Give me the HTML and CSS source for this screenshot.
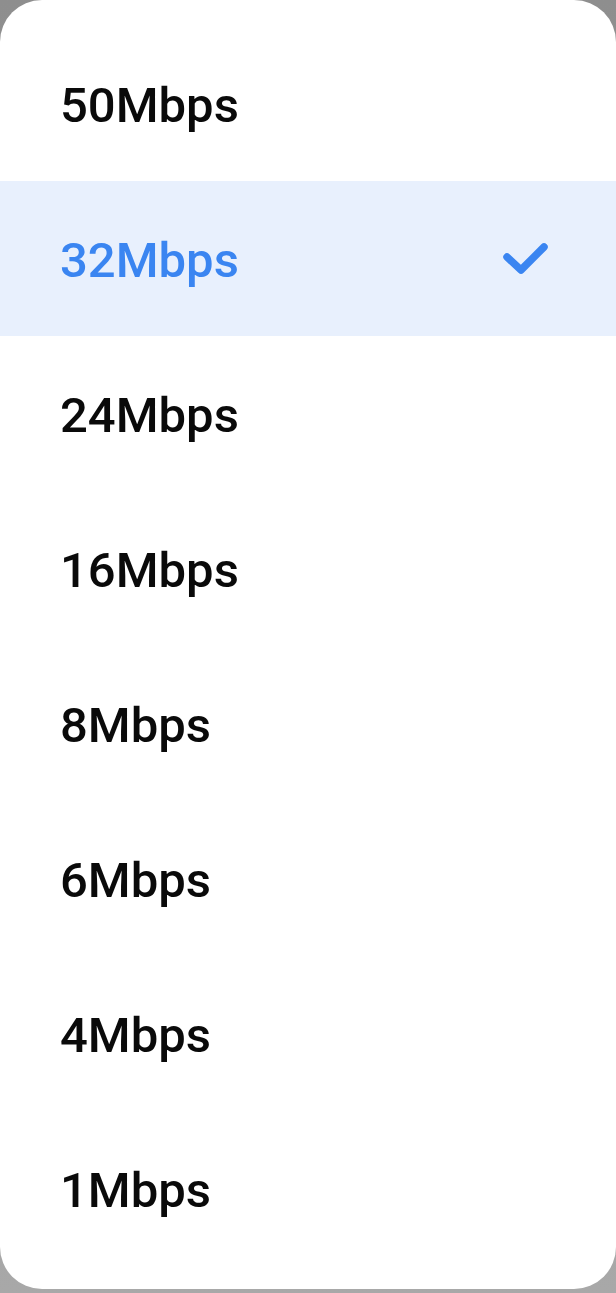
FILE: index.html
```html
<!DOCTYPE html>
<html lang="en">
<head>
    <meta charset="UTF-8">
    <meta name="viewport" content="width=device-width, initial-scale=1.0">
    <title>Débit</title>
    <link rel="stylesheet" href="styles.css">
</head>
<body>
    <div class="sheet">
        <ul class="options">
            <li class="option">50Mbps</li>
            <li class="option selected">
                <span>32Mbps</span>
                <svg class="check" width="52" height="40" viewBox="0 0 52 40">
                    <path d="M7 18 L21 31 L44 8" fill="none" stroke="currentColor" stroke-width="7.5" stroke-linecap="round" stroke-linejoin="round"/>
                </svg>
            </li>
            <li class="option">24Mbps</li>
            <li class="option">16Mbps</li>
            <li class="option">8Mbps</li>
            <li class="option">6Mbps</li>
            <li class="option">4Mbps</li>
            <li class="option">1Mbps</li>
        </ul>
    </div>
</body>
</html>
```

FILE: styles.css
```css
body {
    margin: 0;
    height: 1293px;
    background: linear-gradient(#8e8e8e, #a8a8a8);
    font-family: Roboto, "Noto Sans", sans-serif;
    overflow: hidden;
}
.sheet {
    height: 1289px;
    box-sizing: border-box;
    padding-top: 26px;
    background: #fff;
    border-radius: 42px;
}
.options {
    list-style: none;
    margin: 0;
    padding: 0;
}
.option {
    height: 155px;
    box-sizing: border-box;
    display: flex;
    align-items: center;
    justify-content: space-between;
    padding: 4px 64px 0 60px;
    font-size: 49px;
    font-weight: 500;
    color: #0a0a0a;
}
.selected {
    background: #e8f0fd;
    color: #3a85f1;
}
.check {
    margin-top: -4px;
}
```
